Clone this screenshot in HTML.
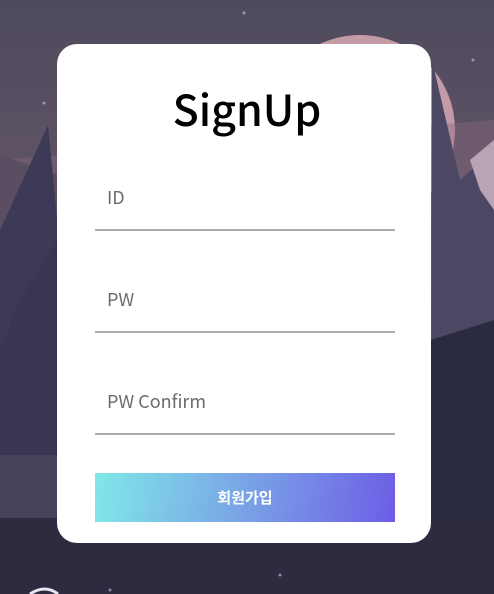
<!DOCTYPE html>
<html><head><meta charset="utf-8"><style>
*{margin:0;padding:0;box-sizing:border-box}
body{width:494px;height:594px;overflow:hidden;position:relative;background:#2d2c42;font-family:"Liberation Sans","Noto Sans CJK KR",sans-serif}
svg.bg{position:absolute;left:0;top:0}
.card{position:absolute;left:57px;top:44px;width:374px;height:499px;background:#fff;border-radius:20px}
h1{position:absolute;left:0;right:0;top:78px;text-align:center;font-weight:500;font-size:43px;line-height:60px;color:#000;font-family:"Noto Sans CJK KR",sans-serif}
.f{position:absolute;left:95px;width:300px;border-bottom:2px solid #acacac;height:0}
.l{position:absolute;left:107px;font-size:18px;line-height:24px;color:#6b6b6b;font-family:"Noto Sans CJK KR",sans-serif}
.btn{position:absolute;left:95px;top:473px;width:300px;height:49px;background:linear-gradient(100deg,#80e8e8 0%,#7aaae6 45%,#6e5de6 100%);color:#fff;font-weight:bold;font-size:15px;text-align:center;line-height:49px;font-family:"Noto Sans CJK KR",sans-serif}
</style></head><body>
<svg class="bg" width="494" height="594" viewBox="0 0 494 594">
<defs><linearGradient id="sky" x1="0" y1="0" x2="0" y2="1"><stop offset="0" stop-color="#4e4a5c"/><stop offset="0.5" stop-color="#6a5a6c"/><stop offset="1" stop-color="#3a3650"/></linearGradient></defs>
<rect width="494" height="594" fill="url(#sky)"/>
<circle cx="360" cy="130" r="95" fill="#c49aa6"/>
<polygon points="0,160 494,120 494,520 0,520" fill="#8a6a7c" opacity="0.4"/>
<polygon points="0,155 60,175 90,230 60,260 0,230" fill="#5c4e62"/>
<polygon points="0,230 48,125 60,250 57,520 0,520" fill="#3c3a56"/>
<polygon points="20,300 57,240 57,520 0,520 0,350" fill="#383650"/>
<polygon points="432,60 460,180 494,150 494,520 431,520" fill="#4c4864"/>
<polygon points="470,160 494,140 494,210 480,190" fill="#b8a4b4"/>
<polygon points="431,340 494,320 494,520 431,520" fill="#2a2a40"/>
<rect y="455" width="57" height="65" fill="#45425c"/>
<rect y="518" width="494" height="76" fill="#2c2b40"/>
<circle cx="244" cy="13" r="1.5" fill="#9a96a8"/>
<circle cx="44" cy="103" r="1.5" fill="#9a96a8"/>
<circle cx="473" cy="60" r="1.5" fill="#9a96a8"/>
<circle cx="280" cy="575" r="1.5" fill="#8a88a0"/>
<circle cx="110" cy="590" r="1.5" fill="#8a88a0"/>
<path d="M30 594 Q45 584 58 594" stroke="#e8e8f0" stroke-width="3" fill="none"/>
</svg>
<div class="card"></div>
<h1>SignUp</h1>
<div class="l" style="top:185px">ID</div><div class="f" style="top:229px"></div>
<div class="l" style="top:287px">PW</div><div class="f" style="top:331px"></div>
<div class="l" style="top:389px">PW Confirm</div><div class="f" style="top:433px"></div>
<div class="btn">회원가입</div>
</body></html>
